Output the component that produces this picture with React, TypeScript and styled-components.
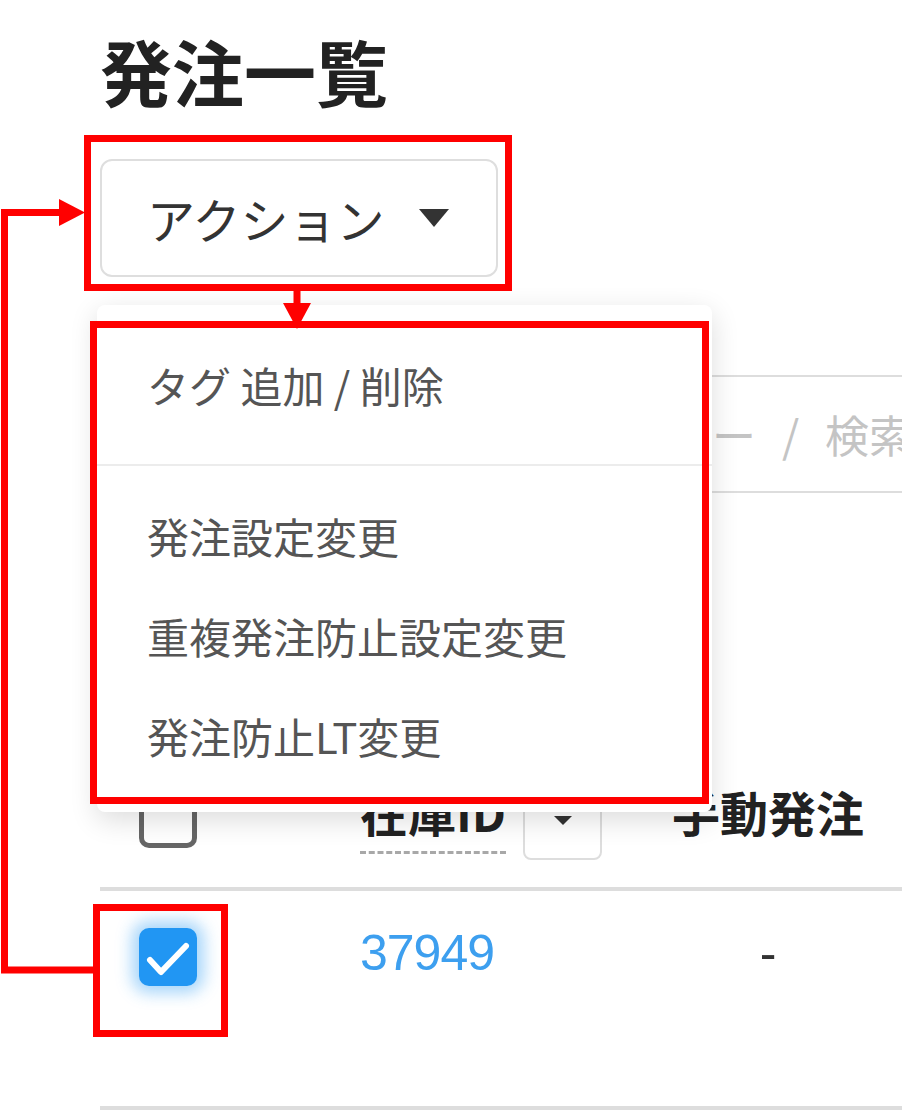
import React from 'react';
import styled, { createGlobalStyle } from 'styled-components';

const GlobalStyle = createGlobalStyle`
  html, body {
    margin: 0;
    padding: 0;
    background: #fff;
  }
  body {
    font-family: "Noto Sans CJK JP", "Noto Sans", sans-serif;
  }
`;

const Canvas = styled.div`
  position: relative;
  width: 902px;
  height: 1117px;
  overflow: hidden;
  background: #fff;
`;

const Page = styled.div`
  padding: 34px 0 0 100px;
  display: flex;
  flex-direction: column;
  align-items: flex-start;
`;

const Title = styled.h1`
  margin: 0;
  font-size: 72px;
  line-height: 1;
  font-weight: 700;
  color: #222;
`;

const ActionButton = styled.div`
  margin-top: 53px;
  box-sizing: border-box;
  width: 398px;
  height: 118px;
  border: 2px solid #dedede;
  border-radius: 12px;
  display: flex;
  align-items: center;
  padding-left: 45px;
  font-size: 48px;
  line-height: 1;
  color: #333;
`;

const Caret = styled.svg`
  margin-left: 34px;
  flex: none;
`;

const SearchBox = styled.div`
  margin-top: 98px;
  box-sizing: border-box;
  width: 900px;
  height: 118px;
  border: 2px solid #dddddd;
  border-radius: 8px;
  display: flex;
  align-items: center;
  padding-left: 435px;
  font-size: 44px;
  line-height: 1;
  color: #c4c4c4;
  word-spacing: 16px;
`;

const Table = styled.div`
  margin-top: 297px;
  width: 820px;
`;

const Row = styled.div<{ $height: number }>`
  display: grid;
  grid-template-columns: 260px 312px 1fr;
  box-sizing: border-box;
  height: ${p => p.$height}px;
  border-bottom: 4px solid #dddddd;
  align-items: start;
`;

const CheckCell = styled.div<{ $top: number }>`
  padding: ${p => p.$top}px 0 0 39px;
`;

const Checkbox = styled.div<{ $checked?: boolean }>`
  box-sizing: border-box;
  width: 58px;
  height: 58px;
  border-radius: 10px;
  display: flex;
  align-items: center;
  justify-content: center;
  ${p =>
    p.$checked
      ? `
    background: #2196f3;
    box-shadow: 0 0 16px 7px rgba(33, 150, 243, 0.4);
  `
      : `
    background: #fff;
    border: 5px solid #666;
  `}
`;

const HeaderCell = styled.div`
  display: flex;
  align-items: flex-start;
  margin-top: -3px;
`;

const HeaderLabel = styled.span<{ $underline?: boolean }>`
  font-size: 48px;
  line-height: 1;
  font-weight: 700;
  color: #222;
  ${p =>
    p.$underline &&
    `
    padding-bottom: 16px;
    border-bottom: 3px dashed #a8a8a8;
  `}
`;

const SortButton = styled.div`
  box-sizing: border-box;
  margin: -7px 0 0 17px;
  width: 79px;
  height: 80px;
  border: 2px solid #dddddd;
  border-radius: 8px;
  display: flex;
  align-items: center;
  justify-content: center;
`;

const BodyCell = styled.div<{ $center?: boolean; $width?: number }>`
  padding-top: 37px;
  font-family: "Liberation Sans", Arial, sans-serif;
  font-size: 50px;
  line-height: 1;
  color: #333;
  ${p => p.$width && `width: ${p.$width}px;`}
  ${p => p.$center && 'text-align: center;'}
`;

const Link = styled.a`
  color: #3d9fef;
  text-decoration: none;
  letter-spacing: -1px;
`;

const Menu = styled.div`
  position: absolute;
  left: 97px;
  top: 305px;
  width: 615px;
  height: 507px;
  box-sizing: border-box;
  padding-top: 30px;
  background: #fff;
  border-radius: 8px;
  box-shadow: 0 8px 28px rgba(0, 0, 0, 0.14);
`;

const MenuItem = styled.div<{ $gap?: number }>`
  height: 100px;
  margin-top: ${p => p.$gap || 0}px;
  padding-left: 50px;
  display: flex;
  align-items: center;
  font-size: 42px;
  line-height: 1;
  color: #555;
  white-space: pre;
`;

const MenuDivider = styled.div`
  margin-top: 29px;
  height: 2px;
  background: #ececec;
`;

const Annotations = styled.svg`
  position: absolute;
  left: 0;
  top: 0;
  pointer-events: none;
`;

const RED = '#ff0000';

export default function App() {
  return (
    <Canvas>
      <GlobalStyle />
      <Page>
        <Title>発注一覧</Title>
        <ActionButton>
          アクション
          <Caret width="30" height="18" viewBox="0 0 30 18">
            <path d="M0 0h30L15 18z" fill="#333" />
          </Caret>
        </ActionButton>
        <SearchBox>フィルター / 検索</SearchBox>
        <Table>
          <Row $height={101}>
            <CheckCell $top={0}>
              <Checkbox />
            </CheckCell>
            <HeaderCell>
              <HeaderLabel $underline>在庫ID</HeaderLabel>
              <SortButton>
                <svg width="18" height="9" viewBox="0 0 18 9">
                  <path d="M0 0h18L9 9z" fill="#333" />
                </svg>
              </SortButton>
            </HeaderCell>
            <HeaderCell>
              <HeaderLabel>手動発注</HeaderLabel>
            </HeaderCell>
          </Row>
          <Row $height={219}>
            <CheckCell $top={37}>
              <Checkbox $checked>
                <svg width="58" height="58" viewBox="0 0 58 58">
                  <path
                    d="M11 32l11 12 25-26"
                    fill="none"
                    stroke="#fff"
                    strokeWidth="6"
                    strokeLinecap="round"
                    strokeLinejoin="round"
                  />
                </svg>
              </Checkbox>
            </CheckCell>
            <BodyCell>
              <Link>37949</Link>
            </BodyCell>
            <BodyCell $center $width={192}>
              -
            </BodyCell>
          </Row>
        </Table>
      </Page>

      <Menu>
        <MenuItem>タグ 追加 / 削除</MenuItem>
        <MenuDivider />
        <MenuItem $gap={20}>発注設定変更</MenuItem>
        <MenuItem>重複発注防止設定変更</MenuItem>
        <MenuItem>発注防止LT変更</MenuItem>
      </Menu>

      <Annotations width="902" height="1117" viewBox="0 0 902 1117">
        <rect x="87.5" y="138.5" width="421" height="149" fill="none" stroke={RED} strokeWidth="7" />
        <rect x="93.5" y="324.5" width="612" height="476" fill="none" stroke={RED} strokeWidth="7" />
        <rect x="96.5" y="907.5" width="128" height="126" fill="none" stroke={RED} strokeWidth="7" />
        <polyline points="96,970 4.5,970 4.5,212.5 62,212.5" fill="none" stroke={RED} strokeWidth="7" />
        <path d="M59 199L85 212.5L59 226z" fill={RED} />
        <line x1="297" y1="290" x2="297" y2="306" stroke={RED} strokeWidth="7" />
        <path d="M283 303h28l-14 26z" fill={RED} />
      </Annotations>
    </Canvas>
  );
}
